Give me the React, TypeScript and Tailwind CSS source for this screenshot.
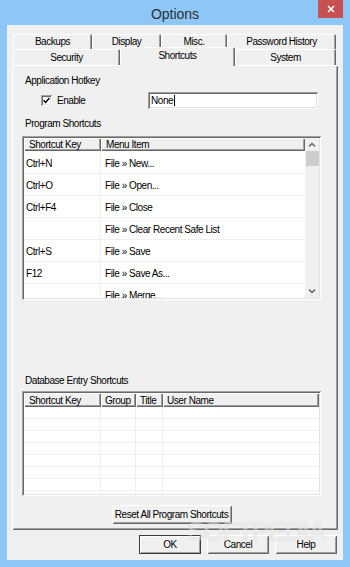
import React from "react";

const raised =
  "shadow-[inset_1px_1px_0_#ffffff,inset_-1px_-1px_0_#696969,inset_2px_2px_0_#f0f0f0,inset_-2px_-2px_0_#a0a0a0]";
const sunken =
  "shadow-[inset_1px_1px_0_#a0a0a0,inset_-1px_-1px_0_#ffffff,inset_2px_2px_0_#696969,inset_-2px_-2px_0_#e3e3e3]";
const headCell =
  "shadow-[inset_1px_1px_0_#ffffff,inset_-1px_-1px_0_#696969,inset_-2px_-2px_0_#a0a0a0]";

const programRows = [
  ["Ctrl+N", "File » New..."],
  ["Ctrl+O", "File » Open..."],
  ["Ctrl+F4", "File » Close"],
  ["", "File » Clear Recent Safe List"],
  ["Ctrl+S", "File » Save"],
  ["F12", "File » Save As..."],
  ["", "File » Merge..."],
];

function Tab({ label, w, selected }: { label: string; w: string; selected?: boolean }) {
  return (
    <div
      className={`${w} flex items-center justify-center bg-[#f0f0f0] rounded-t-[2px] ${
        selected
          ? "h-[19px] -mb-[1px] z-10 pb-[2px] shadow-[inset_1px_1px_0_#ffffff,inset_-1px_0_0_#696969,inset_-2px_0_0_#a0a0a0]"
          : "h-full pt-[1px] shadow-[inset_1px_1px_0_#ffffff,inset_-1px_0_0_#696969,inset_-2px_0_0_#a0a0a0]"
      }`}
    >
      {label}
    </div>
  );
}

function Button({ label, w, isDefault }: { label: string; w: string; isDefault?: boolean }) {
  return (
    <div
      className={`${w} h-[19px] pt-[1px] flex items-center justify-center bg-[#f0f0f0] ${
        isDefault
          ? "shadow-[inset_0_0_0_1px_#3c3c3c,inset_2px_2px_0_#ffffff,inset_-2px_-2px_0_#a0a0a0]"
          : raised
      }`}
    >
      {label}
    </div>
  );
}

function Chevron({ up }: { up?: boolean }) {
  return (
    <svg width="8" height="5" viewBox="0 0 8 5" className={up ? "" : "rotate-180"}>
      <path d="M1 4.5 L4 1.5 L7 4.5" fill="none" stroke="#606060" strokeWidth="1.4" />
    </svg>
  );
}

export default function App() {
  return (
    <div
      className="w-[350px] h-[567px] bg-[#8ec6f5] flex flex-col text-[10px] tracking-[-0.45px] text-black leading-[12px] overflow-hidden"
      style={{ fontFamily: '"Liberation Sans", Arial, sans-serif' }}
    >
      {/* Title bar */}
      <div className="relative h-[25px] flex items-center justify-center">
        <span className="text-[14px] leading-[16px] tracking-normal text-[#25303b] pt-[2px]">Options</span>
        <div className="absolute right-[7px] top-0 w-[25px] h-[18px] bg-[#c75050] flex items-center justify-center">
          <svg width="8" height="8" viewBox="0 0 8 8">
            <path d="M1 1 L7 7 M7 1 L1 7" stroke="#fff" strokeWidth="1.6" />
          </svg>
        </div>
      </div>

      {/* Client */}
      <div className="relative mx-[7px] h-[535px] bg-[#f0f0f0] pt-[8px] pl-[5px] pr-[6px] flex flex-col">
        {/* Tabs */}
        <div className="h-[32px] pl-[1px] flex flex-col">
          <div className="h-[16px] pt-[1px] flex">
            <Tab label="Backups" w="w-[79px]" />
            <Tab label="Display" w="w-[69px]" />
            <Tab label="Misc." w="w-[66px]" />
            <Tab label="Password History" w="w-[109px]" />
          </div>
          <div className="h-[16px] flex items-end">
            <Tab label="Security" w="w-[107px]" />
            <Tab label="Shortcuts" w="w-[115px]" selected />
            <Tab label="System" w="w-[101px]" />
          </div>
        </div>

        {/* Panel */}
        <div className={`w-[326px] h-[465px] flex flex-col bg-[#f0f0f0] ${raised}`}>
          <div className="mt-[10px] pl-[13px] h-[12px]">Application Hotkey</div>
          <div className="mt-[5px] h-[17px] flex items-center">
            <div className="ml-[29px] w-[107px] flex items-center">
              <div className={`w-[11px] h-[11px] bg-white flex items-center justify-center ${sunken}`}>
                <svg width="7" height="7" viewBox="0 0 7 7">
                  <path d="M0.5 3.2 L2.6 5.4 L6.5 1" fill="none" stroke="#000" strokeWidth="1.5" />
                </svg>
              </div>
              <span className="ml-[5px] pt-[1px]">Enable</span>
            </div>
            <div className={`w-[170px] h-[17px] bg-white flex items-center pl-[3px] ${sunken}`}>
              <span className="pt-[1px]">None</span>
              <span className="w-[1px] h-[11px] bg-black ml-[1px]" />
            </div>
          </div>
          <div className="mt-[9px] pl-[13px] h-[12px]">Program Shortcuts</div>

          {/* Program shortcuts list */}
          <div className={`mt-[6px] ml-[10px] w-[299px] h-[164px] bg-white p-[2px] flex ${sunken}`}>
            <div className="w-[281px] flex flex-col overflow-hidden">
              <div className="h-[13px] flex bg-[#f0f0f0] shrink-0">
                <div className={`w-[77px] pl-[5px] pt-[1px] flex items-center ${headCell}`}>Shortcut Key</div>
                <div className={`flex-1 pl-[5px] pt-[1px] flex items-center ${headCell}`}>Menu Item</div>
              </div>
              <div className="pt-[1px] flex flex-col">
                {programRows.map(([key, item], i) => (
                  <div key={i} className="h-[22px] shrink-0 flex border-b border-[#f0f0f0]">
                    <div className="w-[77px] pl-[2px] pt-[2px] flex items-center border-r border-[#f0f0f0]">{key}</div>
                    <div className="flex-1 pl-[4px] pt-[2px] flex items-center">{item}</div>
                  </div>
                ))}
              </div>
            </div>
            {/* Scrollbar */}
            <div className="w-[14px] bg-[#f0f0f0] flex flex-col items-center">
              <div className="h-[13px] flex items-center justify-center">
                <Chevron up />
              </div>
              <div className="w-[13px] h-[15px] bg-[#cdcdcd]" />
              <div className="flex-1" />
              <div className="h-[13px] flex items-center justify-center">
                <Chevron />
              </div>
            </div>
          </div>

          <div className="mt-[75px] pl-[13px] h-[12px]">Database Entry Shortcuts</div>

          {/* Database entry list */}
          <div className={`mt-[4px] ml-[10px] w-[299px] h-[105px] bg-white p-[2px] flex flex-col overflow-hidden ${sunken}`}>
            <div className="h-[14px] flex bg-[#f0f0f0] shrink-0">
              <div className={`w-[77px] pl-[5px] pt-[1px] flex items-center ${headCell}`}>Shortcut Key</div>
              <div className={`w-[35px] pl-[4px] pt-[1px] flex items-center ${headCell}`}>Group</div>
              <div className={`w-[27px] pl-[4px] pt-[1px] flex items-center ${headCell}`}>Title</div>
              <div className={`flex-1 pl-[4px] pt-[1px] flex items-center ${headCell}`}>User Name</div>
            </div>
            {Array.from({ length: 8 }, (_, i) => (
              <div key={i} className="h-[12px] shrink-0 flex border-b border-[#f0f0f0]">
                <div className="w-[77px] border-r border-[#f0f0f0]" />
                <div className="w-[35px] border-r border-[#f0f0f0]" />
                <div className="w-[27px] border-r border-[#f0f0f0]" />
                <div className="flex-1" />
              </div>
            ))}
          </div>

          <div className="mt-[9px] ml-[10px] w-[299px] flex justify-center">
            <Button label="Reset All Program Shortcuts" w="w-[120px]" />
          </div>
        </div>

        {/* Dialog buttons */}
        <div className="mt-[5px] flex justify-end gap-[6px]">
          <Button label="OK" w="w-[62px]" isDefault />
          <Button label="Cancel" w="w-[62px]" />
          <Button label="Help" w="w-[62px]" />
        </div>

        {/* Watermark */}
        <div className="absolute left-[180px] top-[494px] text-[27px] leading-[27px] font-bold tracking-[-1.8px] text-white/45 [text-shadow:0_0_1px_rgba(0,0,0,0.10)] pointer-events-none">
          SOFTPEDIA
        </div>
      </div>
    </div>
  );
}
